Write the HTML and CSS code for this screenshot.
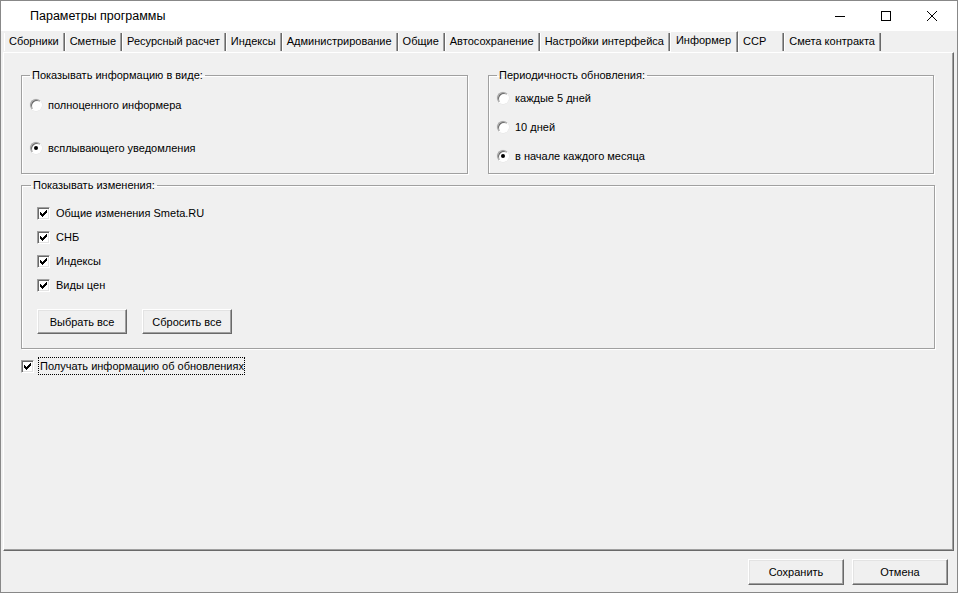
FILE: index.html
```html
<!DOCTYPE html>
<html lang="ru">
<head>
  <meta charset="UTF-8" />
  <title>Параметры программы</title>
  <link rel="stylesheet" href="styles.css">
</head>
<body>
  <div class="window">
    <div class="titlebar">
      <span class="title">Параметры программы</span>
      <div class="controls">
        <span class="ctl"><svg width="12" height="12" viewBox="0 0 12 12"><path d="M1 6.5h10" stroke="#000" stroke-width="1"/></svg></span>
        <span class="ctl"><svg width="12" height="12" viewBox="0 0 12 12"><rect x="1.5" y="1.5" width="9" height="9" fill="none" stroke="#000" stroke-width="1"/></svg></span>
        <span class="ctl"><svg width="12" height="12" viewBox="0 0 12 12"><path d="M1 1l10 10M11 1L1 11" stroke="#000" stroke-width="1"/></svg></span>
      </div>
    </div>

    <div class="tabs">
      <div class="tab">Сборники</div>
      <div class="tab">Сметные</div>
      <div class="tab">Ресурсный расчет</div>
      <div class="tab">Индексы</div>
      <div class="tab">Администрирование</div>
      <div class="tab">Общие</div>
      <div class="tab">Автосохранение</div>
      <div class="tab">Настройки интерфейса</div>
      <div class="tab active">Информер</div>
      <div class="tab tab-ssr">ССР</div>
      <div class="tab">Смета контракта</div>
    </div>

    <div class="panel">
      <div class="row">
        <fieldset class="group group-view">
          <legend>Показывать информацию в виде:</legend>
          <label class="opt opt-first"><span class="radio"></span>полноценного информера</label>
          <label class="opt opt-second"><span class="radio on"></span>всплывающего уведомления</label>
        </fieldset>
        <fieldset class="group group-period">
          <legend>Периодичность обновления:</legend>
          <label class="opt"><span class="radio"></span>каждые 5 дней</label>
          <label class="opt"><span class="radio"></span>10 дней</label>
          <label class="opt"><span class="radio on"></span>в начале каждого месяца</label>
        </fieldset>
      </div>

      <fieldset class="group group-changes">
        <legend>Показывать изменения:</legend>
        <label class="opt"><span class="check on"></span>Общие изменения Smeta.RU</label>
        <label class="opt"><span class="check on"></span>СНБ</label>
        <label class="opt"><span class="check on"></span>Индексы</label>
        <label class="opt"><span class="check on"></span>Виды цен</label>
        <div class="btn-row">
          <button class="btn">Выбрать все</button>
          <button class="btn">Сбросить все</button>
        </div>
      </fieldset>

      <label class="opt opt-updates"><span class="check on"></span><span class="focus">Получать информацию об обновлениях</span></label>
    </div>

    <div class="footer">
      <button class="btn btn-wide">Сохранить</button>
      <button class="btn btn-wide">Отмена</button>
    </div>
  </div>
</body>
</html>
```

FILE: styles.css
```css
* {
  box-sizing: border-box;
}

body {
  margin: 0;
  font-family: 'Liberation Sans', Arial, sans-serif;
  font-size: 11px;
  color: #000;
  background: #f0f0f0;
}

.window {
  width: 958px;
  height: 593px;
  border: 1px solid #888;
  background: #f0f0f0;
  display: flex;
  flex-direction: column;
}

/* title bar */
.titlebar {
  height: 30px;
  background: #fff;
  display: flex;
  align-items: center;
  justify-content: space-between;
  padding-left: 29px;
}

.title {
  font-size: 12.5px;
}

.controls {
  display: flex;
  height: 100%;
  margin-right: 2px;
}

.ctl {
  width: 46px;
  display: flex;
  align-items: center;
  justify-content: center;
}

.ctl svg {
  shape-rendering: crispEdges;
}

/* tabs */
.tabs {
  display: flex;
  height: 21px;
  padding: 2px 0 0 3px;
  position: relative;
  z-index: 1;
}

.tab {
  height: 18px;
  line-height: 17px;
  padding: 0 5px 0 4px;
  border-left: 1px solid #fff;
  border-right: 1px solid #696969;
  box-shadow: inset -1px 0 0 #a0a0a0;
  white-space: nowrap;
}

.tab.active {
  height: 21px;
  margin-top: -2px;
  line-height: 17px;
  padding: 0 6px 0 5px;
  border-top: 1px solid #fff;
  background: #f0f0f0;
}

.tab-ssr {
  padding-right: 17px;
}

/* content panel */
.panel {
  flex: 1;
  margin: 0 3px 0 2px;
  border-top: 1px solid #fff;
  border-left: 1px solid #fff;
  border-right: 1px solid #696969;
  border-bottom: 1px solid #696969;
  box-shadow: inset -1px -1px 0 #a0a0a0;
  padding: 16px 18px 0 17px;
}

.row {
  display: grid;
  grid-template-columns: 447px 446px;
  column-gap: 20px;
}

.group {
  margin: 0;
  min-width: 0;
  border: 1px solid #a0a0a0;
  box-shadow: 1px 1px 0 #fff, inset 1px 1px 0 #fff;
  padding: 0 0 0 8px;
  display: flex;
  flex-direction: column;
  align-items: flex-start;
}

.group legend {
  padding: 0 2px;
  line-height: 13px;
}

.opt {
  display: flex;
  align-items: center;
  height: 16px;
  white-space: nowrap;
}

.group-view {
  padding-bottom: 17px;
}

.group-view .opt-first {
  margin-top: 15px;
}

.group-view .opt-second {
  margin-top: 27px;
}

.group-period {
  padding-bottom: 8px;
}

.group-period .opt {
  margin-top: 13px;
}

.group-period .opt:first-of-type {
  margin-top: 8px;
}

.group-changes {
  margin-top: 5px;
  padding-left: 15px;
  padding-bottom: 14px;
}

.group-changes legend {
  margin-left: -6px;
}

.group-changes .opt {
  margin-top: 8px;
}

.group-changes .opt:first-of-type {
  margin-top: 13px;
}

/* radio buttons */
.radio {
  width: 12px;
  height: 12px;
  border-radius: 50%;
  background: #fff;
  border: 1px solid;
  border-color: #a0a0a0 #fff #fff #a0a0a0;
  box-shadow: inset 1px 1px 0 #696969, 0 0 0 0.5px #e3e3e3;
  margin-right: 6px;
  display: flex;
  align-items: center;
  justify-content: center;
}

.radio.on::after {
  content: '';
  width: 4px;
  height: 4px;
  border-radius: 50%;
  background: #000;
}

/* checkboxes */
.check {
  width: 13px;
  height: 13px;
  background: #fff;
  border: 1px solid;
  border-color: #a0a0a0 #fff #fff #a0a0a0;
  box-shadow: inset 1px 1px 0 #696969, inset -1px -1px 0 #e3e3e3;
  margin-right: 6px;
  flex: none;
}

.check.on {
  background: #fff url("data:image/svg+xml;utf8,<svg xmlns='http://www.w3.org/2000/svg' width='11' height='11' shape-rendering='crispEdges'><path d='M2 4h1v1h1v1h1V5h1V4h1V3h1V2h1v3H8v1H7v1H6v1H5v1H4V8H3V7H2z' fill='black'/></svg>") no-repeat 0 0;
}

/* buttons */
.btn {
  font: inherit;
  color: #000;
  width: 90px;
  height: 25px;
  background: #f0f0f0;
  border: 1px solid;
  border-color: #fff #696969 #696969 #fff;
  box-shadow: inset -1px -1px 0 #a0a0a0, inset 1px 1px 0 #e3e3e3;
  padding: 0;
}

.btn-row {
  display: flex;
  gap: 15px;
  margin-top: 16px;
}

.opt-updates {
  margin: 9px 0 0 0;
}

.opt-updates .check {
  margin-right: 5px;
}

.focus {
  outline: 1px dotted #000;
  padding: 1px 0 1px 1px;
  line-height: 14px;
}

/* footer */
.footer {
  height: 41px;
  display: flex;
  justify-content: flex-end;
  align-items: flex-start;
  gap: 8px;
  padding: 8px 9px 0 0;
}

.btn-wide {
  width: 96px;
  height: 26px;
}
```
